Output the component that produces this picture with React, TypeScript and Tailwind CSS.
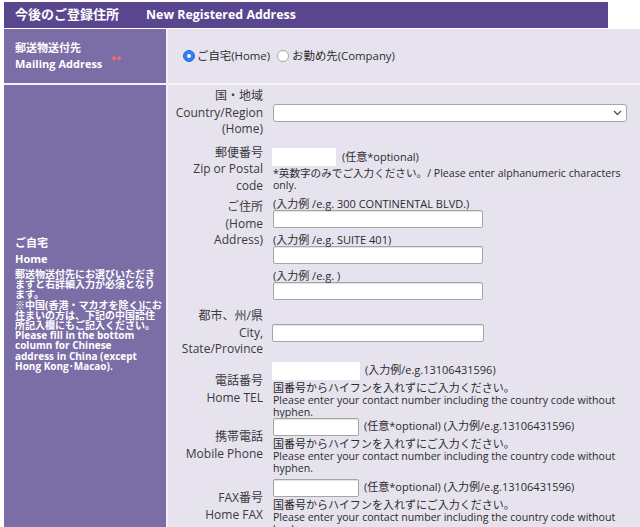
import React from 'react';

const FONT = "font-['Open_Sans','Noto_Sans_CJK_JP',sans-serif]";

function Radio({ checked }: { checked?: boolean }) {
  if (checked) {
    return (
      <span className="inline-flex items-center justify-center w-[12px] h-[12px] rounded-full bg-[#2f7cf6] border border-[#2a6fdc]">
        <span className="w-[4px] h-[4px] rounded-full bg-white" />
      </span>
    );
  }
  return <span className="inline-block w-[12px] h-[12px] rounded-full bg-white border border-[#a8a8a8]" />;
}

function TextBox({ className = '', plain }: { className?: string; plain?: boolean }) {
  return (
    <div
      className={
        'h-[18px] bg-white ' +
        (plain ? '' : 'border border-[#a5a5a5] rounded-[2px] shadow-[inset_0_1px_1px_rgba(0,0,0,0.12)] ') +
        className
      }
    />
  );
}

function Label({ lines }: { lines: string[] }) {
  return (
    <div className="w-[95px] shrink-0 text-right text-[12px] leading-[16.5px] text-[#3a3a3a]">
      {lines.map((l) => (
        <div key={l} className="whitespace-nowrap">{l}</div>
      ))}
    </div>
  );
}

function PhoneHelp() {
  return (
    <div className="text-[11px] leading-[12px] text-[#2b2b2b] mt-[2px]">
      <div>国番号からハイフンを入れずにご入力ください。</div>
      <div className="whitespace-nowrap text-[10.6px]">Please enter your contact number including the country code without</div>
      <div className="text-[10.6px]">hyphen.</div>
    </div>
  );
}

export default function App() {
  return (
    <div className={`w-[640px] h-[527px] overflow-hidden bg-white pt-[2px] pl-[4px] ${FONT}`}>
      <div className="w-[604px] h-[26px] bg-[#5a468f] flex items-center px-[11px] text-white font-bold text-[13px]">
        <span>今後のご登録住所</span>
        <span className="ml-[27px] text-[12.4px]">New Registered Address</span>
      </div>

      <div className="mt-[1px] w-[636px] bg-[#f3f1f7] flex flex-col gap-[2px]">
        {/* mailing address choice */}
        <div className="flex h-[54px] gap-[2px]">
          <div className="w-[162px] bg-[#7b6ea6] flex flex-col justify-center pl-[11px] text-white font-bold text-[11px] leading-[16px]">
            <div>郵送物送付先</div>
            <div className="flex items-start">
              <span>Mailing Address</span>
              <span className="text-[#ff6b6b] text-[9px] leading-[9px] ml-[9px] -mt-[1px]">**</span>
            </div>
          </div>
          <div className="flex-1 bg-[#e6e3ef] flex items-center pl-[15px] text-[11.4px] text-[#2b2b2b]">
            <label className="flex items-center gap-[2px]">
              <Radio checked />
              <span>ご自宅(Home)</span>
            </label>
            <label className="flex items-center gap-[3px] ml-[7px]">
              <Radio />
              <span>お勤め先(Company)</span>
            </label>
          </div>
        </div>

        {/* home address */}
        <div className="flex h-[460px] gap-[2px]">
          <div className="w-[162px] bg-[#7b6ea6] pl-[11px] pt-[150px] text-white font-bold">
            <div className="text-[11px] leading-[16px]">ご自宅</div>
            <div className="text-[11px] leading-[16px]">Home</div>
            <div className="text-[10px] leading-[10.2px] mt-[2px] whitespace-nowrap">
              郵送物送付先にお選びいただき<br />
              ますと右詳細入力が必須となり<br />
              ます。<br />
              ※中国(香港・マカオを除く)にお<br />
              住まいの方は、下記の中国語住<br />
              所記入欄にもご記入ください。<br />
              Please fill in the bottom<br />
              column for Chinese<br />
              address in China (except<br />
              Hong Kong･Macao).
            </div>
          </div>

          <div className="flex-1 bg-[#e6e3ef] pt-[3px] text-[#2b2b2b]">
            {/* country */}
            <div className="flex items-center gap-[10px]">
              <Label lines={['国・地域', 'Country/Region', '(Home)']} />
              <div className="w-[354px] h-[18px] bg-white border border-[#a5a5a5] rounded-[3px] flex items-center justify-end pr-[4px]">
                <svg width="9" height="6" viewBox="0 0 9 6" fill="none" stroke="#555" strokeWidth="1.3">
                  <path d="M1 1l3.5 3.5L8 1" />
                </svg>
              </div>
            </div>

            {/* zip */}
            <div className="flex items-center gap-[9px] mt-[7px]">
              <Label lines={['郵便番号', 'Zip or Postal', 'code']} />
              <div>
                <div className="flex items-center">
                  <TextBox plain className="w-[64px]" />
                  <span className="text-[11px] ml-[6px]">(任意*optional)</span>
                </div>
                <div className="text-[10.6px] leading-[12px] mt-[1px] pl-[1px]">
                  <div className="whitespace-nowrap">*英数字のみでご入力ください。/ Please enter alphanumeric characters</div>
                  <div>only.</div>
                </div>
              </div>
            </div>

            {/* address */}
            <div className="flex items-start gap-[10px] mt-[5px]">
              <Label lines={['ご住所', '(Home', 'Address)']} />
              <div className="flex flex-col gap-[6px] -mt-[1px]">
                <div>
                  <div className="text-[11px] leading-[12px]">(入力例 /e.g. 300 CONTINENTAL BLVD.)</div>
                  <TextBox className="w-[210px]" />
                </div>
                <div>
                  <div className="text-[11px] leading-[12px]">(入力例 /e.g. SUITE 401)</div>
                  <TextBox className="w-[210px]" />
                </div>
                <div>
                  <div className="text-[11px] leading-[12px]">(入力例 /e.g. )</div>
                  <TextBox className="w-[210px]" />
                </div>
              </div>
            </div>

            {/* city */}
            <div className="flex items-center gap-[9px] mt-[8px]">
              <Label lines={['都市、州/県', 'City,', 'State/Province']} />
              <TextBox className="w-[212px]" />
            </div>

            {/* home tel */}
            <div className="flex items-center gap-[9px] mt-[4px]">
              <Label lines={['電話番号', 'Home TEL']} />
              <div>
                <div className="flex items-center">
                  <TextBox plain className="w-[88px]" />
                  <span className="text-[11px] ml-[5px]">(入力例/e.g.13106431596)</span>
                </div>
                <div className="pl-[1px]"><PhoneHelp /></div>
              </div>
            </div>

            {/* mobile */}
            <div className="flex items-center gap-[10px]">
              <Label lines={['携帯電話', 'Mobile Phone']} />
              <div>
                <div className="flex items-center">
                  <TextBox className="w-[86px]" />
                  <span className="text-[11px] ml-[5px]">(任意*optional) (入力例/e.g.13106431596)</span>
                </div>
                <PhoneHelp />
              </div>
            </div>

            {/* fax */}
            <div className="flex items-center gap-[10px] mt-[5px]">
              <Label lines={['FAX番号', 'Home FAX']} />
              <div>
                <div className="flex items-center">
                  <TextBox className="w-[86px]" />
                  <span className="text-[11px] ml-[5px]">(任意*optional) (入力例/e.g.13106431596)</span>
                </div>
                <PhoneHelp />
              </div>
            </div>
          </div>
        </div>
      </div>
    </div>
  );
}
